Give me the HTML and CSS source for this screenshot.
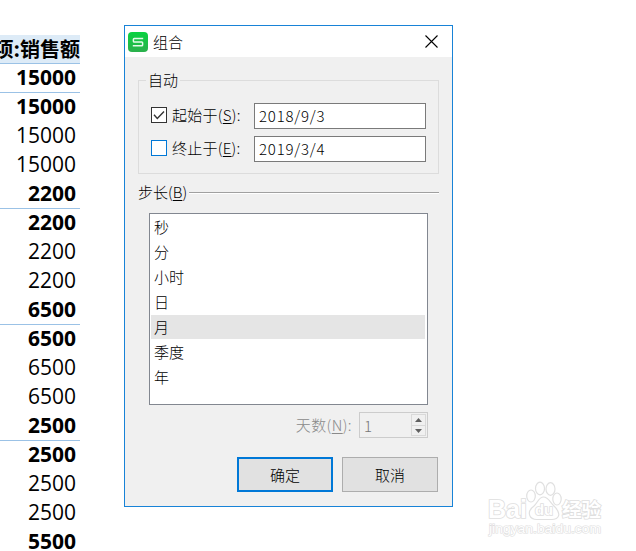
FILE: index.html
```html
<!DOCTYPE html>
<html lang="zh-CN">
<head>
<meta charset="utf-8">
<title>组合</title>
<link rel="stylesheet" href="styles.css">
</head>
<body>
<main class="screen">
  <section class="sheet">
    <div class="sheet-head"><span>项:销售额</span></div>
    <div class="cell bold line">15000</div>
    <div class="cell bold">15000</div>
    <div class="cell">15000</div>
    <div class="cell">15000</div>
    <div class="cell bold line">2200</div>
    <div class="cell bold">2200</div>
    <div class="cell">2200</div>
    <div class="cell">2200</div>
    <div class="cell bold line">6500</div>
    <div class="cell bold">6500</div>
    <div class="cell">6500</div>
    <div class="cell">6500</div>
    <div class="cell bold line">2500</div>
    <div class="cell bold">2500</div>
    <div class="cell">2500</div>
    <div class="cell">2500</div>
    <div class="cell bold">5500</div>
  </section>

  <section class="dialog">
    <header class="titlebar">
      <svg class="logo" width="20" height="20" viewBox="0 0 20 20">
        <defs><linearGradient id="g" x1="0" y1="0" x2="0" y2="1"><stop offset="0" stop-color="#08d240"/><stop offset="1" stop-color="#2bb04c"/></linearGradient></defs>
        <rect width="20" height="20" rx="4" fill="url(#g)"/>
        <path d="M15.200 6.600H6.200Q5.400 6.600 5.400 7.400V9.200Q5.400 10 6.200 10H13.800Q14.600 10 14.600 10.800V12.900Q14.600 13.700 13.800 13.700H4.800" fill="none" stroke="#e4fbe9" stroke-width="1.5"/>
      </svg>
      <span class="title">组合</span>
      <svg class="close" width="13" height="13" viewBox="0 0 13 13"><path d="M.5.5l12 12M12.5.5l-12 12" stroke="#000" stroke-width="1.1"/></svg>
    </header>
    <div class="content">
      <fieldset class="auto">
        <legend>自动</legend>
        <div class="field">
          <span class="check on"><svg width="14" height="14" viewBox="0 0 14 14"><path d="M2 6.8l3.3 3.6L12 3.4" fill="none" stroke="#333" stroke-width="1.4"/></svg></span>
          <span class="label">起始于(<u>S</u>):</span>
          <span class="input">2018/9/3</span>
        </div>
        <div class="field">
          <span class="check"></span>
          <span class="label">终止于(<u>E</u>):</span>
          <span class="input">2019/3/4</span>
        </div>
      </fieldset>
      <div class="step"><span>步长(<u>B</u>)</span><i></i></div>
      <ul class="list">
        <li>秒</li><li>分</li><li>小时</li><li>日</li><li class="selected">月</li><li>季度</li><li>年</li>
      </ul>
      <div class="days">
        <span class="days-label">天数(<u>N</u>):</span>
        <div class="spinner"><span>1</span>
          <div class="arrows">
            <div><svg width="7" height="4" viewBox="0 0 7 4"><path d="M0 4L3.5 0L7 4Z" fill="#606060"/></svg></div>
            <div><svg width="7" height="4" viewBox="0 0 7 4"><path d="M0 0L3.5 4L7 0Z" fill="#606060"/></svg></div>
          </div>
        </div>
      </div>
      <div class="buttons"><div class="button primary">确定</div><div class="button">取消</div></div>
    </div>
  </section>

  <svg class="watermark" width="130" height="75" viewBox="0 0 130 75">
    <g fill="#fff" stroke="#e0e0e0" stroke-width="1.2">
      <ellipse cx="51" cy="26" rx="4.3" ry="6"/>
      <ellipse cx="60" cy="18.500" rx="4.500" ry="6.300"/>
      <ellipse cx="70.500" cy="19" rx="4.500" ry="6.300"/>
      <ellipse cx="77" cy="29" rx="4.200" ry="6"/>
      <path d="M63.500 27C68 27 70 32 74 36C79 41 80 44 78 47C76 50 72 49.500 64 49.500S53 50 50.500 47C48 43 50 39 54 36C58 32 59 27 63.500 27Z"/>
    </g>
    <g class="mark-text">
      <text x="8" y="48" class="brand" textLength="39" lengthAdjust="spacingAndGlyphs">Bai</text>
      <text x="55" y="45" class="du" textLength="18" lengthAdjust="spacingAndGlyphs">du</text>
      <text x="82" y="47" class="zh" textLength="39" lengthAdjust="spacingAndGlyphs">经验</text>
      <text x="9" y="63" class="url" textLength="112" lengthAdjust="spacingAndGlyphs">jingyan.baidu.com</text>
    </g>
  </svg>
</main>
</body>
</html>
```
FILE: styles.css
```css
* { box-sizing: border-box; }
body {
  margin: 0;
  background: #fff;
  color: #000;
  font: 300 15px/20px "Noto Sans CJK SC", sans-serif;
}
u { text-decoration-thickness: 1px; text-underline-offset: 2px; }
.screen {
  display: flex;
  align-items: flex-start;
  position: relative;
  width: 636px;
  height: 551px;
  overflow: hidden;
}
.sheet { width: 80px; margin-top: 35px; flex: none; }
.sheet-head {
  display: flex;
  justify-content: flex-end;
  height: 29px;
  background: #ddebf7;
  border-bottom: 1px solid #9bc2e6;
  font-size: 20px;
  font-weight: 700;
  line-height: 27px;
  white-space: nowrap;
  overflow: hidden;
}
.cell {
  height: 29px;
  padding-right: 4px;
  text-align: right;
  font: 21px/27px "Open Sans", sans-serif;
}
.bold { font-weight: 700; }
.line { border-bottom: 1px solid #9bc2e6; }

.dialog {
  width: 329px;
  height: 482px;
  margin: 25px 0 0 44px;
  border: 1px solid #1883d7;
  background: #f0f0f0;
}
.titlebar {
  display: flex;
  align-items: center;
  height: 31px;
  padding: 0 14px 0 3px;
  background: #fff;
}
.title { margin-left: 5px; flex: 1; }
.content { padding: 14px 13px 0; }
.auto {
  height: 103px;
  margin: 0;
  padding: 13px 12px 0;
  border: 1px solid #dcdcdc;
}
.auto legend { padding: 0 2px; margin-left: -5px; height: 19px; line-height: 18px; }
.field { display: flex; align-items: center; height: 26px; margin-bottom: 7px; }
.check { width: 16px; height: 16px; border: 1px solid #0078d7; background: #fff; }
.field .check { margin-top: -2px; }
.check.on { border-color: #333; }
.check svg { display: block; }
.label { width: 82px; margin: -2px 0 0 5px; white-space: nowrap; letter-spacing: .25px; }
.input {
  width: 172px;
  height: 26px;
  padding: 0 4px;
  border: 1px solid #7a7a7a;
  background: #fff;
  line-height: 24px;
  letter-spacing: .8px;
}
.step { display: flex; align-items: center; height: 20px; margin-top: 8px; }
.step i { flex: 1; height: 2px; margin: 2px 0 0 2px; border-top: 1px solid #a0a0a0; background: #fff; }
.list {
  width: 279px;
  height: 192px;
  margin: 11px 0 0 11px;
  padding: 1px 2px 0 1px;
  border: 1px solid #828790;
  background: #fff;
  list-style: none;
}
.list li { height: 24px; margin-bottom: 1px; padding-left: 3px; line-height: 24px; }
.list .selected { background: #e5e5e5; }
.days { display: flex; align-items: center; justify-content: flex-end; margin: 7px 11px 0 0; color: #8a8a8a; }
.days-label { margin-right: 7px; letter-spacing: .4px; }
.spinner {
  display: flex;
  justify-content: space-between;
  width: 69px;
  height: 26px;
  padding: 1px 1px 1px 4px;
  border: 1px solid #ccc;
  color: #777;
  line-height: 23px;
}
.arrows { display: grid; grid-template-rows: 1fr 1fr; width: 15px; border: 1px solid #d9d9d9; }
.arrows div { display: flex; align-items: center; justify-content: center; }
.arrows div + div { border-top: 1px solid #d9d9d9; }
.buttons { display: flex; justify-content: flex-end; gap: 9px; margin: 19px 1px 0 0; }
.button { width: 96px; height: 35px; border: 1px solid #adadad; background: #e1e1e1; text-align: center; line-height: 33px; }
.primary { border: 2px solid #0078d7; line-height: 31px; }

.watermark { position: absolute; left: 480px; top: 470px; }
.mark-text { fill: #fff; stroke: #dedede; stroke-width: 1.6px; paint-order: stroke; }
.brand { font: 700 25px "Liberation Sans", sans-serif; }
.du { font: 700 15px "Liberation Sans", sans-serif; }
.zh { font: 700 19px "Noto Sans CJK SC", sans-serif; }
.url { font: 13px "Liberation Sans", sans-serif; stroke-width: 1.2px; }
```
